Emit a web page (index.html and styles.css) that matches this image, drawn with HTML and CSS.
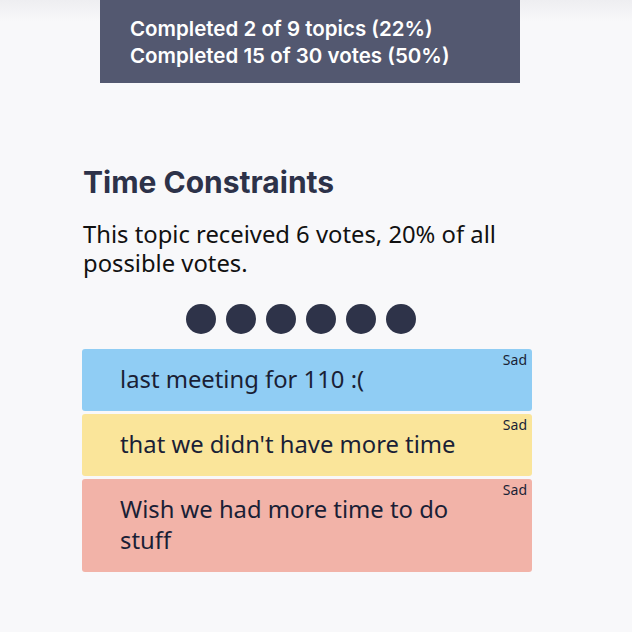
FILE: index.html
```html
<!DOCTYPE html>
<html>
<head>
<meta charset="utf-8">
<link rel="stylesheet" href="styles.css">
</head>
<body>
<div class="progress">
  <div class="progress-line">Completed 2 of 9 topics (22%)</div>
  <div class="progress-line">Completed 15 of 30 votes (50%)</div>
</div>
<main class="topic">
  <h2 class="topic-title">Time Constraints</h2>
  <p class="topic-summary">This topic received 6 votes, 20% of all possible votes.</p>
  <div class="dots">
    <span class="dot"></span><span class="dot"></span><span class="dot"></span><span class="dot"></span><span class="dot"></span><span class="dot"></span>
  </div>
  <div class="cards">
    <div class="card card-blue"><span class="card-tag">Sad</span><div class="card-text">last meeting for 110 :(</div></div>
    <div class="card card-yellow"><span class="card-tag">Sad</span><div class="card-text">that we didn't have more time</div></div>
    <div class="card card-red"><span class="card-tag">Sad</span><div class="card-text">Wish we had more time to do stuff</div></div>
  </div>
</main>
</body>
</html>
```
FILE: styles.css
```css
html, body {
  margin: 0;
  padding: 0;
}
body {
  background: #f8f8fa linear-gradient(#eeeef1, #f8f8fa 22px) no-repeat;
  width: 632px;
  height: 632px;
  overflow: hidden;
  font-family: "Noto Sans", "Open Sans", sans-serif;
}
.progress {
  margin-left: 100px;
  width: 420px;
  height: 83px;
  box-sizing: border-box;
  padding: 15px 30px 0;
  background: #535870;
  color: #ffffff;
  font-family: Inter, "Liberation Sans", sans-serif;
  font-weight: 600;
  font-size: 20.5px;
  line-height: 27px;
}
.topic {
  margin-left: 82px;
  width: 450px;
  padding-top: 82px;
}
.topic-title {
  margin: 0;
  font-family: Inter, "Liberation Sans", sans-serif;
  font-weight: 700;
  font-size: 30px;
  line-height: 34px;
  color: #2d3249;
  padding-left: 1px;
}
.topic-summary {
  margin: 21px 0 0;
  font-size: 23.8px;
  line-height: 29px;
  color: #111111;
  padding-left: 1px;
}
.dots {
  display: flex;
  justify-content: center;
  gap: 10px;
  margin-top: 26px;
  padding-right: 12px;
}
.dot {
  width: 30px;
  height: 30px;
  border-radius: 50%;
  background: #2e3349;
}
.cards {
  display: flex;
  flex-direction: column;
  gap: 3px;
  margin-top: 15px;
}
.card {
  position: relative;
  border-radius: 3px;
  padding: 15px 38px 16px;
  color: #1a1f36;
}
.card-blue { background: #90cdf4; }
.card-yellow { background: #fae59a; }
.card-red { background: #f2b3a8; }
.card-tag {
  position: absolute;
  top: 1px;
  right: 5px;
  font-size: 14px;
  line-height: 19px;
  color: #1a1f36;
}
.card-text {
  font-size: 23.8px;
  line-height: 31px;
}
```
